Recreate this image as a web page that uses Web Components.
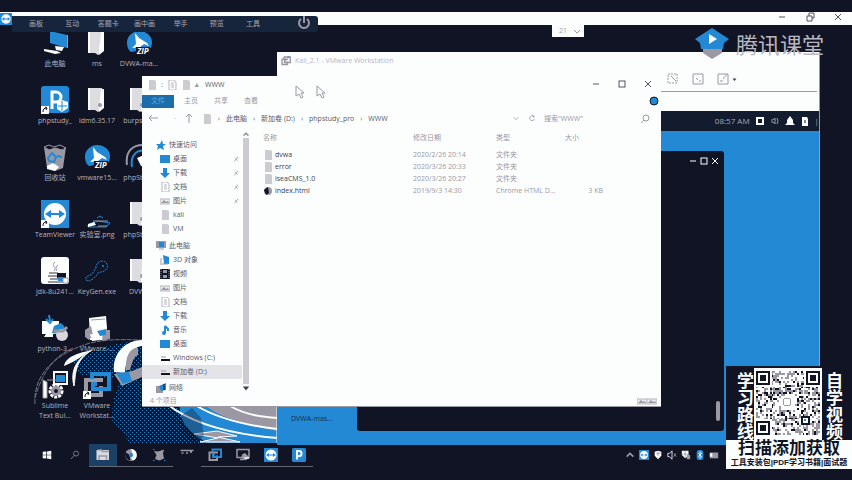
<!DOCTYPE html>
<html lang="zh-CN">
<head>
<meta charset="utf-8">
<title>WWW</title>
<style>
:root{--ink:#111424;--paper:#fcfefe;--mute:#9b98a3;--blue:#2389d4;--mid:#5a5a68}
html,body{height:100%}
body{margin:0;background:var(--ink);color:var(--mute);font:7px/10px "Open Sans","Noto Sans CJK SC",sans-serif;overflow:hidden}
</style>
</head>
<body>
<remote-desktop></remote-desktop>
<script>
const RESET = `:host,*{box-sizing:border-box}button,input{font:inherit;color:inherit;background:none;border:0;padding:0;margin:0;text-align:inherit}button{cursor:pointer}`;
function element(name, css, html, setup) {
  const t = document.createElement('template');
  customElements.define(name, class extends HTMLElement {
    connectedCallback() {
      if (this.shadowRoot) return;
      t.innerHTML = `<style>${RESET}${css}</style>${typeof html === 'function' ? html(this) : html}`;
      this.attachShadow({mode: 'open'}).append(t.content.cloneNode(true));
      if (setup) setup(this);
    }
  });
}

const INK = '#111424', W = '#fcfefe', G = '#9b98a3', B = '#2389d4';
const zipBird = `<path d="M2 14a12 11 0 0 1 25-1c0 5-2 7-4 9H12l-6 1C3 21 2 17 2 14z" fill="${B}"/><path d="M10 4l4 5 8 5 2 3-5-2-4 3-8 1 4-4z" fill="${W}"/><rect x="11" y="18" width="14" height="8" fill="${INK}"/><text x="12" y="25" font-size="8" font-weight="700" font-style="italic" font-family="Open Sans" fill="${W}">ZIP</text>`;
const folder = `<path d="M5 2h14v21l-4 3-3-2H5z" fill="#dcdce1"/><path d="M5 2h2v22H5zM18 3h3v19l-5 4v-5z" fill="${W}"/>`;
const shortcut = `<rect x="0" y="20" width="8" height="8" fill="${W}"/><path d="M2 26c0-3 1-4 4-4M4 21l2 1-1 2" stroke="${INK}" fill="none"/>`;
const vmLoops = `<g fill="none" stroke-width="4"><path d="M20 9H3v15h15v-9" stroke="${G}"/><path d="M9 8V3h17v15H10v-5h4" stroke="${B}"/></g>`;
const viewer = `<rect width="28" height="28" fill="${B}"/><circle cx="14" cy="14" r="11" fill="${W}"/><path d="M4 14l6-4v3h8v-3l6 4-6 4v-3h-8v3z" fill="${B}"/>`;
const P = {
  pc: [28, `<path d="M9 2l17 4v13L9 14z" fill="${B}"/><path d="M26 6l1 0v13l-1 0z" fill="${G}"/><path d="M14 17l9 1-2 4-6-1zM3 20l13 2 4 2-6 1L3 22z" fill="${W}"/>`],
  folder: [28, folder],
  zip: [28, zipBird],
  php: [28, `<rect width="28" height="27" rx="3" fill="${B}"/><path d="M11 23V6h4a5 5 0 0 1 0 10h-4" fill="none" stroke="${W}" stroke-width="3"/><path d="M16 17l5-3 6 2v6l-6 4-5-3z" fill="${W}"/><path d="M21 15v10M17 20h9" stroke="${B}"/>${shortcut}`],
  rar: [28, folder + `<circle cx="17" cy="19" r="2" fill="${G}"/>`],
  bin: [28, `<path d="M3 4h22l-3 21-8 3-8-3z" fill="${G}"/><path d="M3 4l5-2 5 2 6-2 6 3-4 2-7-2-6 2z" fill="${INK}" stroke="${G}"/><path d="M7 15l4-5 4 4-2 5-5-1zM16 13l5 1" stroke="${B}" stroke-width="2" fill="none"/><path d="M6 23l6-3 6 4-4 4-8-2z" fill="${W}"/>`],
  elephant: [28, `<path d="M2 22C0 8 8 1 20 2l8 5v18" fill="none" stroke="${G}" stroke-width="2"/><path d="M7 24C5 12 12 6 22 8" fill="none" stroke="${B}" stroke-width="2"/><path d="M12 15l7-3 6 5v6h-9z" fill="${W}"/>`],
  viewer: [28, viewer + shortcut],
  viewerSmall: [28, viewer],
  car: [28, `<path d="M5 25l10-4 12 2-4 4H5zM14 18l3-2 3 2" fill="none" stroke="${B}"/><path d="M5 24l6-2 2 3-8 2z" fill="${W}"/><path d="M10 21h15M15 26h9" stroke="${G}"/>`],
  java: [28, `<rect width="28" height="27" rx="3" fill="${W}"/><path d="M14 5c-5 4 3 5-1 9M17 8c-4 3 0 4-2 6" fill="none" stroke="${G}"/><path d="M8 16h9M7 19h14M9 22h9M7 25h15" stroke="${G}" stroke-width="2"/><path d="M16 16h9v5h-9z" fill="${INK}"/><path d="M17 20h5v4h-5z" fill="${B}"/><path d="M22 21h5v5h-5z" fill="${W}" stroke="${G}"/>`],
  key: [28, `<path d="M13 11c-1-6 8-10 11-4 2 5-4 9-8 8l-3 4-3 3-4 2-3-1v-3l6-3z" fill="none" stroke="${B}" stroke-dasharray="2 1"/><circle cx="20" cy="9" r="1" fill="${B}"/>`],
  python: [28, `<path d="M1 7h17v13H1zM5 20h7v3H3z" fill="${W}"/><path d="M8 1l1 6M5 5l4 4 3-4" stroke="${B}" stroke-width="2" fill="none"/><path d="M13 12l7-3 3 3v5l-5 3-7-1z" fill="${B}"/><circle cx="21" cy="21" r="6" fill="#d6d6dc"/><path d="M13 17h9l4-4" stroke="${G}" stroke-width="3" fill="none"/>`],
  installer: [28, `<path d="M6 4l17-2 1 12-3 12H7z" fill="${W}"/><path d="M8 6l14-1" stroke="${G}"/><path d="M2 16l6-4 2 9-4 5-4-3zM20 16h7v9l-8 2z" fill="${G}"/><path d="M14 17l9-2v6l-6 1z" fill="${B}"/><path d="M7 20l8 1 3 5-9 1z" fill="${W}"/>`],
  sublime: [28, `<path d="M13 1h13v12H13z" fill="${INK}" stroke="${W}" stroke-width="2"/><path d="M15 4h9v7h-9z" fill="${B}"/><path d="M2 9l4 2v16H2zM6 9h9" fill="${W}" stroke="${G}"/><circle cx="15" cy="20" r="6" fill="none" stroke="${W}" stroke-width="3" stroke-dasharray="3 1"/><circle cx="15" cy="20" r="5" fill="${G}"/><circle cx="15" cy="20" r="2" fill="${INK}"/>`],
  vmware: [28, vmLoops + shortcut],
  vmSmall: [28, vmLoops],
  vmTitle: [28, `<path d="M20 9H3v15h15v-9M9 8V3h17v15H10v-5h4" fill="none" stroke="${G}" stroke-width="4"/><path d="M18 3h6" stroke="${B}" stroke-width="3"/>`],
  win: [28, `<path d="M2 5l10-1v9H2zM14 4l12-2v11H14zM2 15h10v9L2 23zM14 15h12v11l-12-2z" fill="${W}"/>`],
  search: [28, `<circle cx="17" cy="10" r="7" fill="none" stroke="${G}" stroke-width="2"/><path d="M12 15L3 25" stroke="${G}" stroke-width="2"/>`],
  explorer: [28, `<path d="M1 4h25v20H1z" fill="#d8d8de"/><path d="M4 4h7l2 3h13M6 24v-8h15v8" stroke="${G}" stroke-width="3" fill="none"/>`],
  chrome: [28, `<circle cx="14" cy="14" r="12" fill="${G}"/><path d="M14 2a12 12 0 0 1 4 23l-4-5 5-6-3-5z" fill="${W}"/><path d="M3 8l8 6 2 11C5 24 0 16 3 8z" fill="${INK}"/><circle cx="14" cy="14" r="4" fill="${B}"/>`],
  sub2: [28, `<path d="M4 6l8 1 12-4-2 8 2 10-9 4-9-3 3-8z" fill="${G}"/><path d="M2 3h3M2 25h3M24 25h3" stroke="${B}" stroke-width="2"/>`],
  dash: [28, `<path d="M1 5h26M3 10h4M12 10h4M20 8h4" stroke="${G}" stroke-width="3"/>`],
  monitor: [28, `<path d="M2 3h24v16H2zM8 23h8" fill="none" stroke="${G}" stroke-width="3"/><path d="M12 13l6-3 5 5 3 5-7 5-8-5z" fill="${G}"/><path d="M17 20h9" stroke="${W}" stroke-width="3"/>`],
  ptask: [28, `<rect width="28" height="28" rx="3" fill="${B}"/><path d="M10 23V6h5a4 5 0 0 1 0 10h-5" fill="none" stroke="${W}" stroke-width="4"/>`],
  up: [12, `<path d="M2 8l4-4 4 4" fill="none" stroke="${G}" stroke-width="2"/>`],
  shield: [12, `<path d="M2 2l4-1 4 1v5l-4 4-4-4z" fill="${W}"/><path d="M6 2v5M4 4h5" stroke="${G}"/>`],
  mute: [12, `<path d="M1 4h2l3-3v10L3 8H1z" fill="none" stroke="${W}"/><path d="M8 4l3 4M11 4L8 8" stroke="${G}"/>`],
  guard: [12, `<path d="M1 1h8v6l-4 3-4-4z" fill="${W}"/><path d="M7 6h4v5H7z" fill="${G}"/><path d="M5 1v8M1 5h8" stroke="${G}"/>`],
  bt: [12, `<rect x="2" width="8" height="12" rx="3" fill="${B}"/><path d="M4 4l4 4-2 2V2l2 2-4 4" stroke="${W}" fill="none"/>`],
  battery: [12, `<path d="M1 3h10v7H1z" fill="${G}"/><path d="M1 4h3v4H1z" fill="${W}"/>`],
  quick: [10, `<path d="M6 0l1 4h3L7 6l1 4-4-2-3 2 1-4-2-2h4z" fill="${B}"/>`],
  screen: [10, `<rect y="1" width="10" height="8" fill="${B}"/>`],
  down: [10, `<path d="M3 0h4v5h3L5 10 0 5h3z" fill="${B}"/>`],
  doc: [10, `<path d="M2 0h5l2 2v8H2z" fill="${W}" stroke="#b9b7bf"/><path d="M4 3h3M4 5h3M4 7h3" stroke="#b9b7bf"/>`],
  pic: [10, `<path d="M0 3h10v5H0z" fill="#e9e9ee" stroke="#b9b7bf"/><path d="M1 7l3-3 2 2 2-1 1 2z" fill="${G}"/>`],
  dir: [10, `<path d="M2 0h5l2 1v9H2z" fill="#cccbd1"/>`],
  tpc: [10, `<rect width="10" height="7" fill="${G}"/><path d="M3 1h5v5H3z" fill="${B}"/><path d="M3 8h5" stroke="${G}"/>`],
  cube: [10, `<path d="M3 0l6 2v7H4z" fill="${B}"/><path d="M0 9h8M1 3v5" stroke="${G}"/>`],
  film: [10, `<rect width="10" height="10" fill="${INK}"/><path d="M3 1h4v3H3zM3 6h4v3H3z" fill="${G}"/><path d="M1 0v10M9 0v10" stroke="${G}" stroke-dasharray="1 1"/>`],
  music: [10, `<path d="M5 1v7M5 1l3 3v2" stroke="${B}" stroke-width="2" fill="none"/><circle cx="4" cy="8" r="2" fill="${B}"/>`],
  drive: [10, `<path d="M1 4h5" stroke="${G}"/><rect x="1" y="6" width="9" height="2" fill="${INK}"/>`],
  net: [10, `<rect y="3" width="7" height="7" fill="${G}"/><path d="M3 3l7-3v7l-5 1z" fill="${B}"/><path d="M8 1v6" stroke="${INK}"/>`],
  html: [10, `<circle cx="5" cy="5" r="4" fill="${G}"/><path d="M1 4l4-3 1 6-3 2z" fill="${INK}"/>`],
  pin: [10, `<path d="M3 8l4-5M4 4l3 3M6 2l2 2" stroke="${G}"/>`],
  back: [10, `<path d="M10 5H1M4 2L1 5l3 3" stroke="${G}" fill="none"/>`],
  parent: [10, `<path d="M5 10V1M2 4l3-3 3 3" stroke="${G}" fill="none"/>`],
  chevron: [10, `<path d="M2 4l3 3 3-3" stroke="${G}" fill="none"/>`],
  tri: [10, `<path d="M1 3h8L5 8z" fill="#41404d"/>`],
  caret: [10, `<path d="M2 7l3-3 3 3" stroke="${G}" fill="none" stroke-width="2"/>`],
  reload: [10, `<path d="M7 3a3 3 0 1 0 1 3M5 1l3 2-2 2" stroke="${G}" fill="none"/>`],
  find: [10, `<circle cx="6" cy="4" r="3" fill="none" stroke="${G}"/><path d="M4 6L1 9" stroke="${G}"/>`],
  min: [10, `<path d="M2 5h6" stroke="currentColor"/>`],
  max: [10, `<rect x="2" y="2" width="6" height="6" fill="none" stroke="currentColor"/>`],
  restore: [10, `<path d="M2 4h5v5H2zM4 4V1h5v5H7" fill="none" stroke="currentColor"/>`],
  close: [10, `<path d="M2 2l6 6M8 2L2 8" stroke="currentColor"/>`],
  help: [10, `<circle cx="5" cy="5" r="4" fill="${B}" stroke="${INK}"/>`],
  power: [14, `<path d="M4 3a5 5 0 1 0 6 0M7 0v7" fill="none" stroke="${G}" stroke-width="2"/>`],
  tool1: [12, `<path d="M1 1h9v9H1z" fill="none" stroke="${G}" stroke-dasharray="2 1"/><path d="M4 3l5 5" stroke="${G}"/>`],
  tool2: [12, `<path d="M1 1h10v10H1zM4 5l2 2M7 8h2" fill="none" stroke="${G}"/>`],
  tool3: [12, `<path d="M1 1h10v10H1zM6 6l4-5M3 8h3" fill="none" stroke="${G}"/>`],
  rec: [10, `<path d="M2 2h6v6H2z" fill="none" stroke="${W}" stroke-width="2"/>`],
  sound: [10, `<path d="M1 4h2l2-2v6L3 6H1M7 2l1 3-1 3" stroke="${G}" fill="none"/>`],
  bell: [10, `<path d="M5 0l3 4v3l2 2H0l2-2V4z" fill="${W}"/>`],
  lock: [10, `<path d="M2 1h5l1 2v7H2z" fill="${W}"/><path d="M5 4v3" stroke="${INK}"/>`],
  cursor: [14, `<path d="M2 1v10l3-2 2 4 2-1-2-4h3z" fill="${W}" stroke="${G}"/>`]
};
element('ui-glyph', ':host{display:inline-block;flex:none}svg{display:block;width:100%;height:100%}', h => {
  const [box, art] = P[h.getAttribute('name')], s = h.getAttribute('size') || 10;
  return `<style>:host{width:${s}px;height:${s}px}</style><svg viewBox="0 0 ${box} ${box}" aria-hidden="true">${art}</svg>`;
});
const g = (n, s = 10) => `<ui-glyph name="${n}" size="${s}"></ui-glyph>`;

element('desk-icon', `:host{display:block;min-width:0}button{display:flex;flex-direction:column;align-items:center;gap:2px;width:100%;color:#b5b3bb}span{text-align:center;white-space:pre}`,
  h => `<button>${g(h.getAttribute('icon'), 28)}<span><slot></slot></span></button>`);

element('meeting-bar', `:host{display:flex;align-items:center;height:16px;width:306px;padding:0 7px 0 6px;background:#17253c;border-radius:0 3px 3px 0;color:var(--mute)}nav{display:grid;grid-template-columns:repeat(7,1fr);flex:1;margin-right:26px}button{color:#aaa8b0;text-align:center;font-size:7px}`,
  `<nav>${['画板','互动','答题卡','画中画','举手','预览','工具'].map(t => `<button>${t}</button>`).join('')}</nav><button aria-label="关闭">${g('power', 14)}</button>`);

element('session-bar', `:host{display:flex;align-items:center;justify-content:space-between;height:13px;background:var(--paper);color:#55535f}div{display:flex;gap:18px;padding-right:9px}button{display:block}`,
  `${g('viewerSmall', 12)}<div><button aria-label="最小化">${g('min')}</button><button aria-label="还原">${g('restore')}</button><button aria-label="关闭">${g('close')}</button></div>`);

element('car-wallpaper', ':host{display:block}svg{display:block;width:100%;height:100%}',
`<svg viewBox="34 336 244 107" aria-hidden="true">
<defs><pattern id="d" width="4" height="4" patternUnits="userSpaceOnUse"><path d="M0 0h1v1H0zM2 2h1v1H2z" fill="${B}"/></pattern></defs>
<path d="M73 362c24-16 55-22 69-21v30l-24 7-38-3z" fill="url(#d)"/>
<path d="M112 420c0-35 12-48 30-55v41h135v37H130z" fill="url(#d)"/>
<path d="M180 404h98v39h-70c-16-8-30-20-28-39z" fill="${B}"/>
<path d="M205 405h73v26c-30-5-60-14-73-26z" fill="${G}"/>
<path d="M167 404c24 19 60 30 111 34M195 405c20 12 45 20 83 24M230 406c16 9 32 11 48 12" fill="none" stroke="${W}" stroke-width="2"/>
<path d="M194 434l23-3 20 5-19 1 22 5h-40l18-4z" fill="${G}" stroke="${W}"/>
<path d="M182 415l10-7 9 10 3 18-10 7c-10-4-15-15-12-28z" fill="${INK}" opacity=".35"/>
<path d="M35 404c-2-29 19-50 55-61 22-5 38-3 52-3M73 348c-20 8-32 28-38 50" fill="none" stroke="#6f7485" stroke-dasharray="5 1"/>
<path d="M64 366c2-10 15-13 28-16-9 5-17 12-28 16z" fill="${W}"/><path d="M92 350c-16 9-22 21-18 36 2-12 0-25 18-36z" fill="${W}" stroke="${W}"/>
<path d="M114 372c-2-20 13-32 28-32v6c-10 1-16 11-17 27z" fill="${W}"/><path d="M126 370c-1-15 5-23 12-22v7c-4 1-6 8-8 15z" fill="${G}"/>
<path d="M114 374l18-3 10-4v10l-20 9z" fill="${G}"/><path d="M116 373l13-1 3 9-9 3z" fill="${B}"/>
<path d="M277 406v37" stroke="${W}"/></svg>`);

element('vm-window', `:host{display:flex;flex-direction:column;background:var(--paper);border-right:1px solid var(--mute)}
header{height:59px;flex:none;padding:3px 0 0 4px;display:flex;flex-direction:column;gap:2px;color:#b8b6be}
.title{display:flex;align-items:center;gap:4px;height:12px;font-size:7px}.tools{display:flex;justify-content:flex-end;gap:13px;height:20px;align-items:center;padding-right:82px}.tools span{display:flex;align-items:center;gap:3px}.line{height:1px;background:var(--mute);margin:0 2px 0 380px}
.panel{height:20px;flex:none;background:#131b2e;display:flex;align-items:center;justify-content:flex-end;gap:5px;color:#aaa8b0;font-size:8px}
.desk{flex:1;min-height:0;background:var(--blue);display:flex;padding:20px 95px 14px 0}
aside{width:80px;flex:none;display:flex;flex-direction:column;justify-content:flex-end;padding:0 0 7px 14px;color:#12304d}
section{flex:1;min-width:0;background:var(--ink);border-radius:3px;color:var(--paper);display:flex;flex-direction:column;align-items:flex-end;justify-content:space-between;padding:5px 4px 10px}section div{display:flex;gap:1px}button{display:block}i{width:4px;height:20px;background:var(--mute);border-radius:2px}`,
`<header><div class="title">${g('vmTitle')}<span>Kali_2.1 - VMware Workstation</span></div><div class="tools">${g('tool1',12)}${g('tool2',12)}<span>${g('tool3',12)}${g('tri',5)}</span></div><div class="line"></div></header>
<div class="panel"><span>08:57 AM</span>${g('rec')}${g('sound')}${g('bell')}${g('lock')}<span>|</span></div>
<div class="desk"><aside>DVWA-mas...</aside><section><div><button aria-label="最小化">${g('min')}</button><button aria-label="最大化">${g('max')}</button><button aria-label="关闭">${g('close')}</button></div><i></i></section></div>`);

element('nav-item', `:host{display:block}a{display:flex;align-items:center;gap:3px;height:14px;color:var(--mid);text-decoration:none;padding:0 2px 0 18px}:host([head]) a{padding-left:14px}:host([on]) a{background:#e4e4e8}span{flex:1}`,
  h => `<a href="#">${g(h.getAttribute('icon'))}<span><slot></slot></span>${h.hasAttribute('pinned') ? g('pin', 8) : ''}</a>`);
const n = (i, t, a = '') => `<nav-item icon="${i}" ${a}>${t}</nav-item>`;
const crumbs = ['此电脑','新加卷 (D:)','phpstudy_pro','WWW'];
element('explorer-window', `:host{display:flex;flex-direction:column;background:var(--paper);border-bottom:1px solid var(--mute);color:var(--mute)}
.title{display:flex;align-items:center;gap:4px;height:18px;padding:0 8px 0 5px;color:var(--mute)}.title span{margin-left:2px;color:var(--mid);flex:1}.ctl{display:flex;gap:16px;color:#55535f}button{display:block}
.tabs{display:flex;align-items:center;height:14px;padding-right:2px;gap:16px}.tabs button{height:13px;width:14px}.tabs .file{width:32px;background:#1d6dab;color:#5aa5df;text-align:center;margin-right:-6px}.tabs ui-glyph{margin-left:auto}
.addr{display:flex;align-items:center;height:22px;padding:0 11px 0 6px;gap:8px}.path{display:flex;flex:1;gap:6px;color:var(--mid);align-items:center}.path i{font-style:normal}.path button{white-space:nowrap}.addr input{width:88px;outline:0}.addr input::placeholder{color:var(--mute);opacity:1}
.body{display:grid;grid-template-columns:100px 8px minmax(0,1fr)}nav{padding-top:8px}nav .a{margin-top:3px}nav .b{margin-top:2px}
.bar{display:flex;flex-direction:column;padding-bottom:3px}.bar div{flex:1;margin:0 1px;background:#cccbd1}
main{padding:0 58px 0 13px}table{width:100%;border-collapse:collapse;table-layout:fixed}th,td{padding:0;height:12px;text-align:left;font-weight:400;white-space:nowrap}th{height:19px;padding-bottom:4px}td:first-child{color:#41404d}td div{display:flex;align-items:center;gap:2px}td:last-child{text-align:right}
footer{display:flex;justify-content:space-between;align-items:center;height:11px;padding:0 4px 0 8px}footer div{display:flex}`,
`<div class="title">${g('dir')}<b>:</b>${g('doc')}${g('dir')}<b>▴</b><span>WWW</span><div class="ctl"><button aria-label="最小化">${g('min')}</button><button aria-label="最大化">${g('max')}</button><button aria-label="关闭">${g('close')}</button></div></div>
<div class="tabs"><button class="file">文件</button><button>主页</button><button>共享</button><button>查看</button>${g('help')}</div>
<div class="addr"><button aria-label="后退">${g('back')}</button><span></span><span>·</span><button aria-label="上一级">${g('parent')}</button><div class="path">${g('dir')}${crumbs.map(c => `<i>›</i><button>${c}</button>`).join('')}</div><button aria-label="展开">${g('chevron',8)}</button><button aria-label="刷新">${g('reload',8)}</button><input aria-label="搜索" placeholder='搜索"WWW"'>${g('find')}</div>
<div class="body"><nav>${n('quick','快速访问','head')}${n('screen','桌面','pinned')}${n('down','下载','pinned')}${n('doc','文档','pinned')}${n('pic','图片','pinned')}${n('dir','kali')}${n('dir','VM')}
<div class="a">${n('tpc','此电脑','head')}${n('cube','3D 对象')}${n('film','视频')}${n('pic','图片')}${n('doc','文档')}${n('down','下载')}${n('music','音乐')}${n('screen','桌面')}${n('drive','Windows (C:)')}${n('drive','新加卷 (D:)','on')}</div><div class="b">${n('net','网络','head')}</div></nav><div class="bar">${g('caret',8)}<div></div>${g('tri',8)}</div>
<main><table><colgroup><col><col style="width:83px"><col style="width:69px"><col style="width:38px"></colgroup><thead><tr><th>名称</th><th>修改日期</th><th>类型</th><th>大小</th></tr></thead><tbody>
${[['dir','dvwa','2020/2/26 20:14','文件夹',''],['dir','error','2020/3/26 20:33','文件夹',''],['dir','iseaCMS_1.0','2020/3/26 20:27','文件夹',''],['html','index.html','2019/9/3 14:30','Chrome HTML D...','3 KB']].map(r => `<tr><td><div>${g(r[0])}${r[1]}</div></td><td>${r[2]}</td><td>${r[3]}</td><td>${r[4]}</td></tr>`).join('')}</tbody></table></main></div>
<footer><span>4 个项目</span><div>${g('pic')}${g('pic')}</div></footer>`);

element('task-bar', `:host{display:flex;align-items:flex-start;height:26px;background:var(--ink)}.apps{display:flex;padding-left:33px}.apps button{width:28px;height:23px;display:flex;justify-content:center;align-items:center;border-bottom:1px solid transparent}.apps .run{border-color:#686873}.apps .on{background:#1a4066}.tray{margin-left:auto;display:flex;gap:4px;padding:6px 133px 0 0;align-items:center}`,
`<div class="apps">${[['win','开始'],['search','搜索'],['explorer','文件资源管理器','on run'],['chrome','Chrome','run'],['sub2','Sublime Text','run'],['dash','终端'],['vmSmall','VMware','run'],['monitor','远程','run'],['viewerSmall','TeamViewer','run'],['ptask','phpStudy','run']].map(a => `<button aria-label="${a[1]}" class="${a[2]||''}">${g(a[0], a[0]=='win'||a[0]=='search'?10:14)}</button>`).join('')}</div>
<div class="tray">${g('up')}${g('viewerSmall')}${g('shield')}${g('mute')}${g('guard')}${g('bt')}${g('battery')}</div>`);

element('brand-mark', `:host{display:flex;align-items:center;gap:6px;color:#b9b7bf;font:22px/30px "Noto Sans CJK SC",sans-serif}svg{width:36px;height:32px}`,
`<svg viewBox="0 0 36 32" aria-hidden="true"><path d="M9 22l9-3 10 3v4l-10 6-9-6z" fill="${G}"/><path d="M18 1l17 11-5 4-1 6H7l-1-6-5-4z" fill="${B}"/><path d="M15 7l8 5-8 5z" fill="${W}"/></svg><span>腾讯课堂</span>`);

element('qr-code', ':host{display:block;background:var(--paper);padding:2px}svg{display:block;width:100%}', `<svg viewBox="0 0 33 33" shape-rendering="crispEdges" role="img" aria-label="二维码"></svg>`, h => {
  let s = 91, out = '';
  const finder = (x, y) => x < 8 && y < 8 || x > 24 && y < 8 || x < 8 && y > 24 || x > 12 && x < 20 && y > 12 && y < 20;
  for (let y = 0; y < 33; y++) for (let x = 0; x < 33; x++) {
    s = (s * 1103515245 + 12345) % 2147483648;
    if (!finder(x, y) && (s >> 12) % 100 < 50) out += `<path d="M${x} ${y}h1v1h-1z" fill="${(s >> 20) % 3 ? G : INK}"/>`;
  }
  for (const [x, y] of [[0,0],[26,0],[0,26]]) out += `<path d="M${x} ${y}h7v7h-7zM${x+1} ${y+1}v5h5v-5zM${x+2} ${y+2}h3v3h-3z" fill-rule="evenodd" fill="${INK}"/>`;
  out += `<path d="M23 23h5v5h-5z" fill="${INK}"/><path d="M24 24h3v3h-3z" fill="${W}"/><path d="M25 25h1v1h-1z" fill="${B}"/><circle cx="16" cy="16" r="2" fill="none" stroke="${G}" stroke-width=".5"/>`;
  h.shadowRoot.querySelector('svg').innerHTML = out;
});
element('promo-card', `:host{display:block;width:126px;background:var(--ink);color:var(--paper);font-family:"Liberation Sans","Noto Sans CJK SC",sans-serif;font-weight:700}
.top{display:flex;justify-content:space-between;padding:2px 11px 0 9px;height:74px}.side{width:17px;height:68px;font-size:17px;line-height:17px;margin-top:4px;writing-mode:vertical-rl;white-space:nowrap}qr-code{width:68px;height:72px;padding:3px 2px}
.band{background:var(--paper);color:var(--ink);text-align:center;white-space:nowrap;height:29px}.big{font-size:17px;line-height:18px}.small{font-size:8px;line-height:10px}`,
`<div class="top"><div class="side">学习路线</div><qr-code></qr-code><div class="side">自学视频</div></div><div class="band"><div class="big">扫描添加获取</div><div class="small">工具安装包|PDF学习书籍|面试题</div></div>`);

const d = (i, t) => `<desk-icon icon="${i}">${t}</desk-icon>`;
element('remote-desktop', `:host{display:block;position:relative;height:100vh;min-height:470px;overflow:hidden;padding-top:12px}
car-wallpaper,vm-window,explorer-window,task-bar,meeting-bar,brand-mark,promo-card,.icons,.chip,.c1,.c2{position:absolute}
car-wallpaper{left:34px;bottom:37px;width:244px;height:107px}
.icons{left:34px;top:29px;display:grid;grid-template-columns:repeat(3,42px);grid-auto-rows:57px}
meeting-bar{left:12px;top:16px}.chip{left:552px;top:25px;width:32px;height:12px;padding:0 2px;background:var(--paper);display:flex;align-items:center;justify-content:space-between}
vm-window{left:277px;right:32px;top:52px;bottom:35px}explorer-window{left:142px;right:191px;top:76px}
task-bar{left:0;right:0;bottom:10px}brand-mark{right:28px;top:27px}promo-card{right:0;bottom:11px}
.c1{left:294px;top:85px}.c2{left:315px;top:85px}`,
`<session-bar></session-bar><car-wallpaper></car-wallpaper>
<div class="icons">${d('pc','此电脑')}${d('folder','ms')}${d('zip','DVWA-ma...')}${d('php','phpstudy_')}${d('rar','idm6.35.17')}${d('rar','burpsuite')}${d('bin','回收站')}${d('zip','vmware15...')}${d('elephant','phpStudy')}${d('viewer','TeamViewer')}${d('car','实验室.png')}${d('rar','phpStudy')}${d('java','jdk-8u241...')}${d('key','KeyGen.exe')}${d('rar','DVWA')}${d('python','python-3...')}${d('installer','VMware-...')}<span></span>${d('sublime','Sublime\nText Bui...')}${d('vmware','VMware\nWorkstat...')}</div>
<meeting-bar></meeting-bar><div class="chip"><span></span><span>21</span>${g('chevron')}</div>
<task-bar></task-bar><vm-window></vm-window><explorer-window></explorer-window>
<ui-glyph class="c1" name="cursor" size="14"></ui-glyph><ui-glyph class="c2" name="cursor" size="14"></ui-glyph>
<brand-mark></brand-mark><promo-card></promo-card>`);
</script>
</body>
</html>
